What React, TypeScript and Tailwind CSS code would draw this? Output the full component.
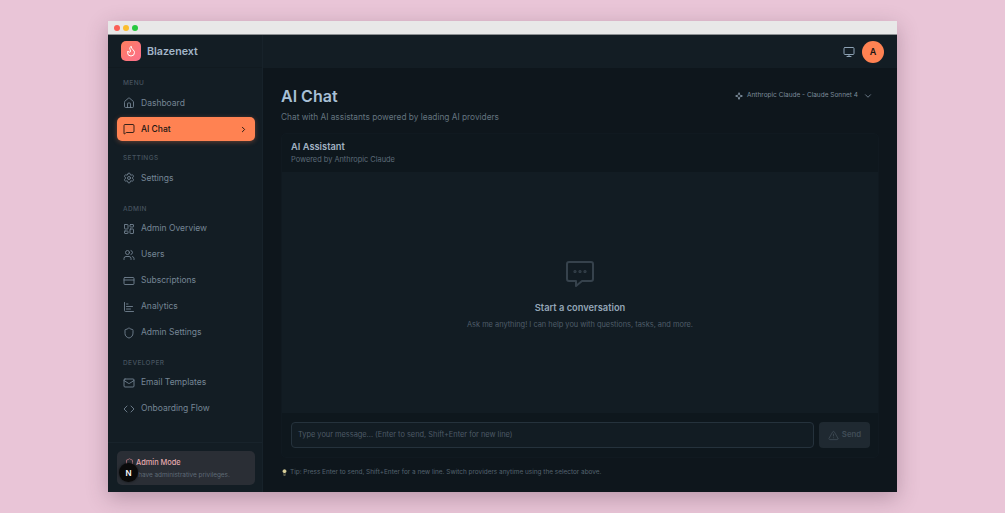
import React from 'react'
import {
  ChartBar,
  ChevronDown,
  ChevronRight,
  Code,
  CreditCard,
  Flame,
  House,
  LayoutDashboard,
  Lightbulb,
  Mail,
  MessageSquare,
  Monitor,
  Settings,
  Shield,
  Sparkle,
  TriangleAlert,
  Users,
} from 'lucide-react'

const sections = [
  { label: 'MENU', items: [{ name: 'Dashboard', icon: House }, { name: 'AI Chat', icon: MessageSquare, active: true }] },
  { label: 'SETTINGS', items: [{ name: 'Settings', icon: Settings }] },
  {
    label: 'ADMIN',
    items: [
      { name: 'Admin Overview', icon: LayoutDashboard },
      { name: 'Users', icon: Users },
      { name: 'Subscriptions', icon: CreditCard },
      { name: 'Analytics', icon: ChartBar },
      { name: 'Admin Settings', icon: Shield },
    ],
  },
  { label: 'DEVELOPER', items: [{ name: 'Email Templates', icon: Mail }, { name: 'Onboarding Flow', icon: Code }] },
]

function ChatBubbleIcon() {
  return (
    <svg className="w-[30px] h-[30px] text-[#36424c]" viewBox="0 0 30 30" fill="none" stroke="currentColor" strokeWidth={2} strokeLinejoin="round">
      <path d="M4 3h22a2 2 0 0 1 2 2v15a2 2 0 0 1-2 2h-9l-6 5v-5H4a2 2 0 0 1-2-2V5a2 2 0 0 1 2-2z" />
      <circle cx="10" cy="12.5" r="0.6" />
      <circle cx="15" cy="12.5" r="0.6" />
      <circle cx="20" cy="12.5" r="0.6" />
    </svg>
  )
}

function Sidebar() {
  return (
    <aside className="w-[155px] shrink-0 flex flex-col bg-[#131d24] border-r border-[#17222a]">
      <div className="h-[33px] shrink-0 flex items-center pl-[13px] gap-[6px] border-b border-[#111a20]">
        <div className="w-5 h-5 rounded-[5px] bg-gradient-to-br from-[#ff7d5c] to-[#fb6f8c] flex items-center justify-center">
          <Flame className="w-3 h-3 text-white" strokeWidth={2} />
        </div>
        <span className="pt-[2px] text-[10.7px] font-semibold text-[#a3b6c9]">Blazenext</span>
      </div>
      <nav className="flex-1 pl-[9px] pr-[7px] pt-[11px]">
        {sections.map((section) => (
          <div key={section.label} className="mb-[13.25px]">
            <div className="h-[10px] mb-px pl-[6px] flex items-center text-[6.5px] font-medium tracking-[0.06em] text-[#46535f]">
              {section.label}
            </div>
            {section.items.map((item) => {
              const Icon = item.icon
              return (
                <div
                  key={item.name}
                  className={
                    item.active
                      ? 'h-6 my-px flex items-center gap-[6px] pl-[6px] pr-[7px] rounded-[5px] bg-[#ff8252] text-[#1b1512] shadow-[0_1px_5px_rgba(255,130,82,0.35)]'
                      : 'h-[26px] flex items-center gap-[6px] pl-[6px] pr-[7px] text-[#758594]'
                  }
                >
                  <Icon className="w-3 h-3 shrink-0" strokeWidth={1.75} />
                  <span className={item.active ? 'text-[8.5px] font-medium flex-1' : 'text-[8.5px] flex-1'}>
                    {item.name}
                  </span>
                  {item.active && <ChevronRight className="w-[9px] h-[9px]" strokeWidth={2.5} />}
                </div>
              )
            })}
          </div>
        ))}
      </nav>
      <div className="h-[50px] shrink-0 border-t border-[#18232b] pl-[9px] pr-[7px] pt-2">
        <div className="relative h-[34px] rounded-[5px] bg-[#2a2e35] pl-[8px] pt-[6px]">
          <div className="flex items-center gap-[2px]">
            <Shield className="w-[9px] h-[9px] text-[#c87f88]" strokeWidth={2} />
            <span className="text-[7.4px] font-medium text-[#e3a9ae]">Admin Mode</span>
          </div>
          <p className="mt-[3px] text-[6.4px] text-[#5f6a75]">You have administrative privileges.</p>
          <div className="absolute left-[2px] top-[12px] w-[19px] h-[19px] rounded-full bg-[#0a0a0a] flex items-center justify-center shadow-[0_0_3px_rgba(0,0,0,0.6)]">
            <span className="text-[8px] font-semibold text-white">N</span>
          </div>
        </div>
      </div>
    </aside>
  )
}

export default function App() {
  return (
    <div className="w-[1005px] h-[513px] overflow-hidden bg-[#e9c5d7] pt-[21px] pl-[108px] font-['Inter',sans-serif]">
      <div className="w-[789px] h-[471px] flex flex-col overflow-hidden shadow-[0_6px_20px_rgba(70,40,60,0.3)]">
        <div className="h-[14px] shrink-0 bg-[#e8e8e8] flex items-center gap-[3px] pl-[6px] border-b border-[#8d9093]">
          <span className="w-[6px] h-[6px] rounded-full bg-[#fb5f57]" />
          <span className="w-[6px] h-[6px] rounded-full bg-[#fbbd2e]" />
          <span className="w-[6px] h-[6px] rounded-full bg-[#28c840]" />
        </div>
        <div className="flex-1 flex min-h-0">
          <Sidebar />
          <main className="flex-1 min-w-0 flex flex-col bg-[#0e161c]">
            <header className="h-[33px] shrink-0 bg-[#131d24] flex items-center justify-end pr-[13px] gap-[7px]">
              <Monitor className="w-3 h-3 text-[#8da2b5]" strokeWidth={2} />
              <div className="w-[22px] h-[22px] rounded-full bg-[#ff8252] flex items-center justify-center text-[9px] font-semibold text-[#1b1512]">
                A
              </div>
            </header>
            <div className="flex-1 min-h-0 pl-[18px] pr-[18px] flex flex-col">
              <div className="h-[65px] shrink-0 flex items-start justify-between pt-[18px]">
                <div>
                  <h1 className="text-[16px] leading-[20px] font-semibold text-[#a8c0d6]">AI Chat</h1>
                  <p className="mt-[5px] text-[8.3px] leading-[12px] text-[#64747f]">Chat with AI assistants powered by leading AI providers</p>
                </div>
                <div className="mt-[-2px] mr-[6px] h-6 flex items-center gap-[4px] text-[#7c8c9b]">
                  <Sparkle className="w-2 h-2" strokeWidth={3} />
                  <span className="mr-[1px] text-[6.5px]">Anthropic Claude - Claude Sonnet 4</span>
                  <ChevronDown className="w-[10px] h-[10px]" strokeWidth={2} />
                </div>
              </div>
              <section className="h-[325px] shrink-0 flex flex-col rounded-[5px] border border-[#101920] bg-[#0e171d]">
                <div className="h-[38px] shrink-0 pl-[9px] pt-[7px]">
                  <h2 className="text-[9.3px] leading-[12px] font-semibold text-[#a1b2c2]">AI Assistant</h2>
                  <p className="mt-[2px] text-[7.4px] leading-[10px] text-[#5d6b78]">Powered by Anthropic Claude</p>
                </div>
                <div className="flex-1 bg-[#121c23] flex flex-col items-center pt-[87px]">
                  <ChatBubbleIcon />
                  <h3 className="mt-[13px] text-[9.3px] leading-[12px] font-semibold text-[#94a6b7]">Start a conversation</h3>
                  <p className="mt-[6px] text-[7.4px] leading-[10px] text-[#4f5d69]">Ask me anything! I can help you with questions, tasks, and more.</p>
                </div>
                <div className="h-[44px] shrink-0 flex items-center gap-[5px] pl-[9px] pr-[8px]">
                  <div className="flex-1 h-[26px] rounded-[4px] border border-[#25323c] bg-[#121c23] pl-[6px] flex items-center text-[7.4px] text-[#4d5a66]">
                    Type your message... (Enter to send, Shift+Enter for new line)
                  </div>
                  <div className="w-[51px] h-[26px] rounded-[4px] bg-[#1f2931] flex items-center justify-center gap-[3px] text-[#414d57]">
                    <TriangleAlert className="w-[11px] h-[11px]" strokeWidth={1.75} />
                    <span className="text-[7.8px] font-semibold">Send</span>
                  </div>
                </div>
              </section>
              <div className="mt-[10px] flex items-center gap-[2px] text-[6.45px] text-[#54626e]">
                <Lightbulb className="w-[7px] h-[7px] text-[#d8cf9a] fill-[#d8cf9a]" strokeWidth={1.5} />
                <span>Tip: Press Enter to send, Shift+Enter for a new line. Switch providers anytime using the selector above.</span>
              </div>
            </div>
          </main>
        </div>
      </div>
    </div>
  )
}
